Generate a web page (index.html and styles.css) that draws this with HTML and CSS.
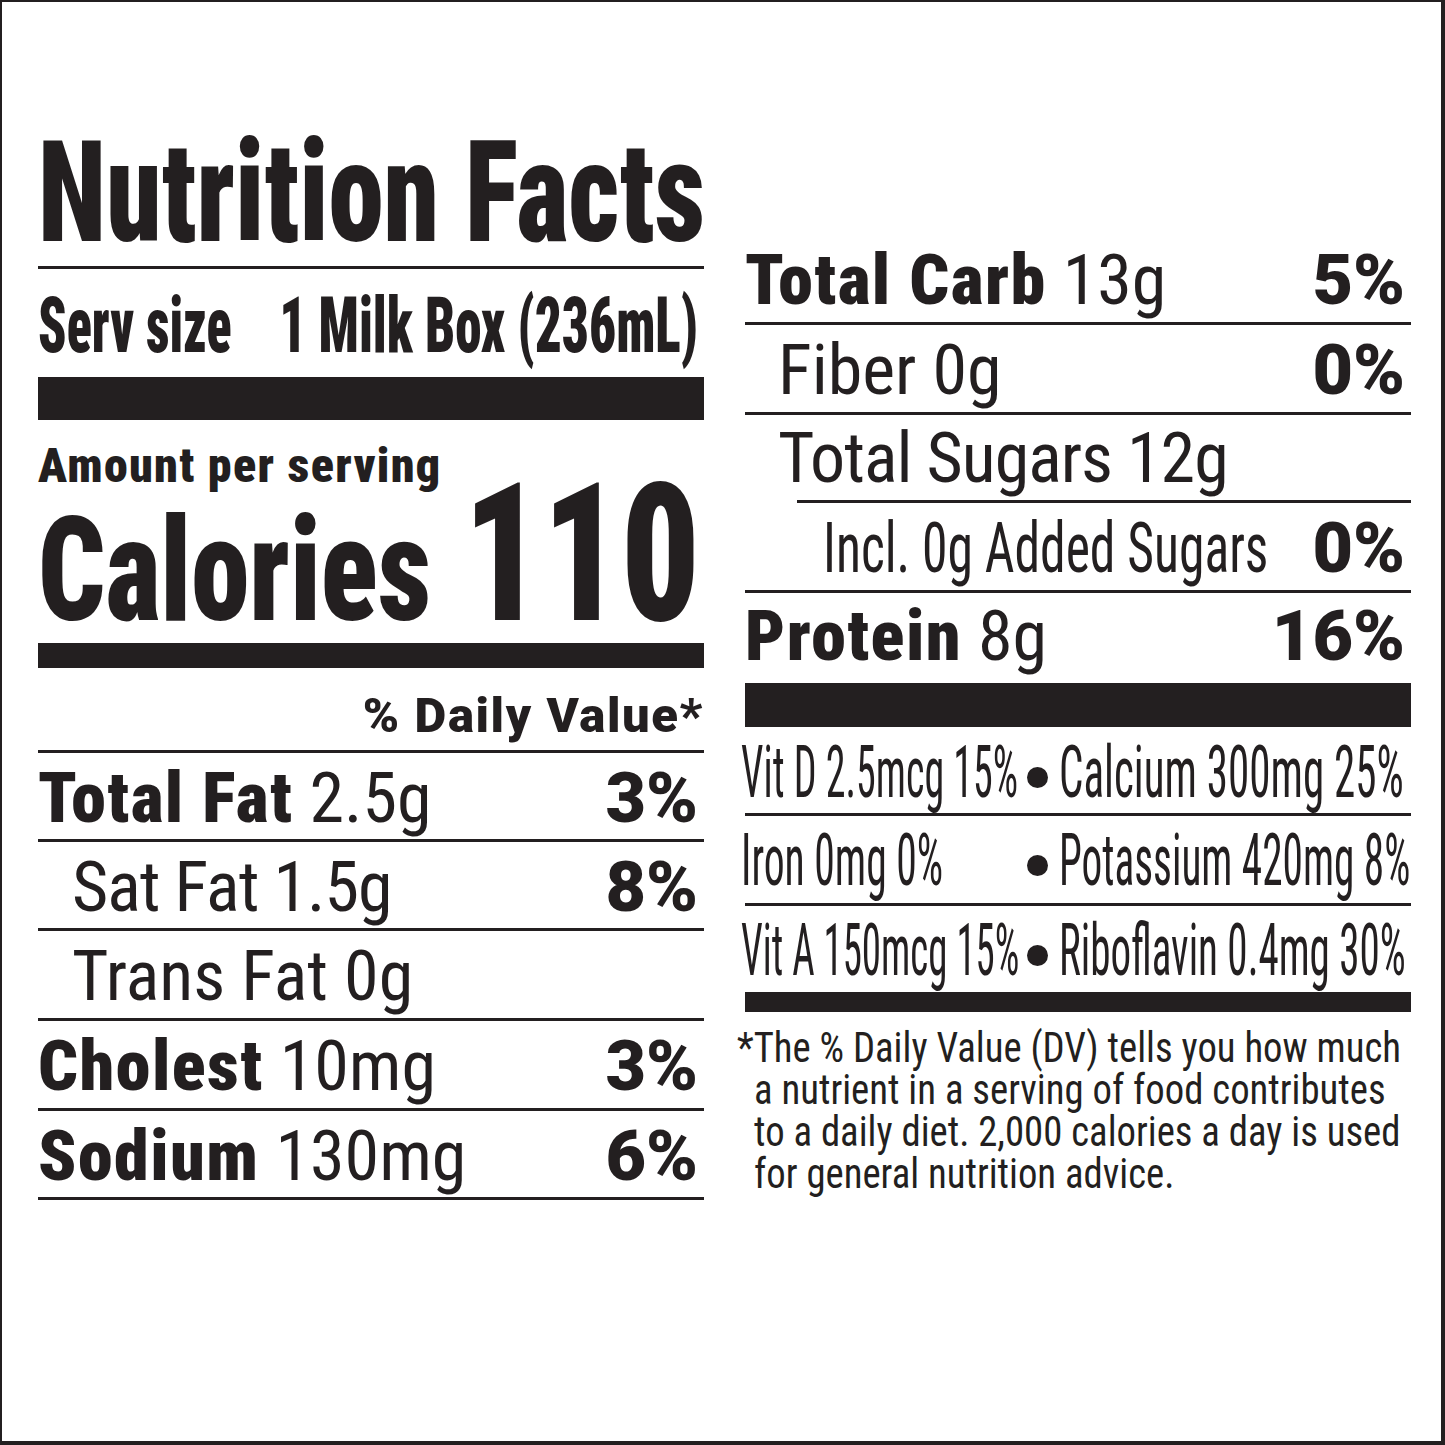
FILE: index.html
```html
<!DOCTYPE html>
<html lang="en">
<head>
<meta charset="utf-8">
<title>Nutrition Facts</title>
<link rel="stylesheet" href="styles.css">
</head>
<body>
<div class="label">
  <div class="col left">
    <div class="title"><span class="sx sx-title">Nutrition Facts</span></div>
    <div class="serv"><span class="sx sx-serv">Serv size</span><span class="sx sx-box">1 Milk Box (236mL)</span></div>
    <div class="bar bar43"></div>
    <div class="amount">Amount per serving</div>
    <div class="cal"><span class="sx sx-cal">Calories</span><span class="sx sx-num">110</span></div>
    <div class="bar bar25"></div>
    <div class="dv">% Daily Value*</div>
    <div class="row"><span><b>Total Fat</b> 2.5g</span><b class="pct">3%</b></div>
    <div class="row ind"><span class="tight">Sat Fat 1.5g</span><b class="pct">8%</b></div>
    <div class="row h90 ind"><span>Trans Fat 0g</span></div>
    <div class="row h90"><span><b>Cholest</b> 10mg</span><b class="pct">3%</b></div>
    <div class="row"><span><b>Sodium</b> 130mg</span><b class="pct">6%</b></div>
  </div>
  <div class="col right">
    <div class="row h90"><span><b>Total Carb</b> 13g</span><b class="pct">5%</b></div>
    <div class="row h90 ind2"><span>Fiber 0g</span><b class="pct">0%</b></div>
    <div class="row sugars ind2"><span class="tight">Total Sugars 12g</span></div>
    <div class="subrule"></div>
    <div class="row h90 added"><span class="sx sx-added">Incl. 0g Added Sugars</span><b class="pct">0%</b></div>
    <div class="row protein"><span><b>Protein</b> 8g</span><b class="pct">16%</b></div>
    <div class="vrow"><span class="vl sx-vd">Vit D 2.5mcg 15%</span><span class="dot"></span><span class="vr sx-ca">Calcium 300mg 25%</span></div>
    <div class="vrow v2"><span class="vl sx-ir">Iron 0mg 0%</span><span class="dot"></span><span class="vr sx-po">Potassium 420mg 8%</span></div>
    <div class="vrow v3"><span class="vl sx-va">Vit A 150mcg 15%</span><span class="dot"></span><span class="vr sx-ri">Riboflavin 0.4mg 30%</span></div>
    <p class="note">*The % Daily Value (DV) tells you how much<br>a nutrient in a serving of food contributes<br>to a daily diet. 2,000 calories a day is used<br>for general nutrition advice.</p>
  </div>
</div>
</body>
</html>
```
FILE: styles.css
```css
* { box-sizing: border-box; margin: 0; padding: 0; }
body { margin: 0; background: #fff; }

.label {
  width: 1445px;
  height: 1445px;
  overflow: hidden;
  border-style: solid;
  border-color: #231f20;
  border-width: 2px 4px 4px 2px;
  display: flex;
  align-items: flex-start;
  gap: 41px;
  padding-left: 36px;
  font-family: Roboto, "Liberation Sans", sans-serif;
  font-stretch: 75%;
  font-weight: 400;
  color: #231f20;
  background: #fff;
  white-space: nowrap;
}

.col { width: 666px; flex: none; }
.left { padding-top: 120px; }
.right { padding-top: 233px; }

b { font-weight: 900; letter-spacing: 1.5px; }
b.pct { font-stretch: 100%; letter-spacing: 0; }
.tight { letter-spacing: -1px; }

/* horizontal condensing of the label type */
.sx { display: inline-block; transform-origin: left center; }
.sx-title { transform: scaleX(0.793); }
.sx-serv { transform: scaleX(0.675); }
.sx-box { transform: scaleX(0.69); transform-origin: right center; }
.sx-cal { transform: scaleX(0.8125); }
.sx-num { transform: scaleX(0.80); transform-origin: right center; }
.sx-added { transform: scaleX(0.737); }
.sx-vd { transform: scaleX(0.556); }
.sx-ir { transform: scaleX(0.578); }
.sx-va { transform: scaleX(0.54); }
.sx-ca { transform: scaleX(0.598); }
.sx-po { transform: scaleX(0.573); }
.sx-ri { transform: scaleX(0.57); }

.title {
  font-size: 141px;
  font-weight: 900;
  line-height: 141px;
  height: 147px;
  padding-bottom: 3px;
  border-bottom: 3px solid #231f20;
}

.serv {
  display: flex;
  justify-content: space-between;
  height: 108px;
  padding-top: 6px;
  padding-right: 6px;
  line-height: 102px;
  font-size: 77px;
  font-weight: 900;
}
.serv > :first-child, .cal > :first-child, .row > :first-child { min-width: 0; flex: 0 1 auto; }
.serv > :last-child, .cal > :last-child, .row > :last-child { flex: none; }

.bar { background: #231f20; }
.bar43 { height: 43px; }
.bar25 { height: 25px; }

.amount {
  height: 70px;
  padding-top: 22px;
  font-size: 48px;
  line-height: 48px;
  font-weight: 900;
  letter-spacing: 1.3px;
}

.cal {
  display: flex;
  justify-content: space-between;
  align-items: baseline;
  margin-top: -11px;
  height: 164px;
  line-height: 150px;
  font-weight: 900;
  padding-right: 4px;
}
.sx-cal { font-size: 145px; }
.sx-num { font-size: 193px; }

.dv {
  height: 85px;
  padding-top: 23px;
  line-height: 49px;
  font-size: 49px;
  font-weight: 900;
  font-stretch: 100%;
  letter-spacing: 1.6px;
  text-align: right;
  border-bottom: 3px solid #231f20;
}

.row {
  display: flex;
  justify-content: space-between;
  height: 89px;
  padding-top: 10px;
  padding-right: 6px;
  line-height: 70px;
  font-size: 70px;
  border-bottom: 3px solid #231f20;
}
.row.h90 { height: 90px; }
.ind { padding-left: 34px; }
.ind2 { padding-left: 33px; }

.row.sugars { height: 85px; padding-top: 8px; border-bottom: none; }
.subrule { height: 3px; margin-left: 52px; background: #231f20; }
.row.added { height: 90px; padding-left: 78px; }
.row.protein { height: 134px; padding-top: 8px; border-bottom-width: 44px; }

.vrow {
  height: 89px;
  padding-top: 11px;
  line-height: 70px;
  font-size: 72px;
  border-bottom: 3px solid #231f20;
}
.vrow.v2 { height: 90px; padding-top: 10px; }
.vrow.v3 { height: 106px; padding-top: 10px; border-bottom-width: 20px; }
.vl { display: inline-block; width: 283px; margin-left: -4px; transform-origin: left center; }
.dot {
  display: inline-block;
  width: 21px;
  height: 21px;
  border-radius: 50%;
  background: #231f20;
  margin: 0 11px 0 3px;
  vertical-align: 9px;
}
.vr { display: inline-block; transform-origin: left center; }

.note {
  margin-top: 15px;
  margin-left: -8px;
  padding-left: 18.5px;
  text-indent: -18.5px;
  font-size: 42px;
  line-height: 42px;
  transform: scaleX(0.922);
  transform-origin: left top;
}
```
